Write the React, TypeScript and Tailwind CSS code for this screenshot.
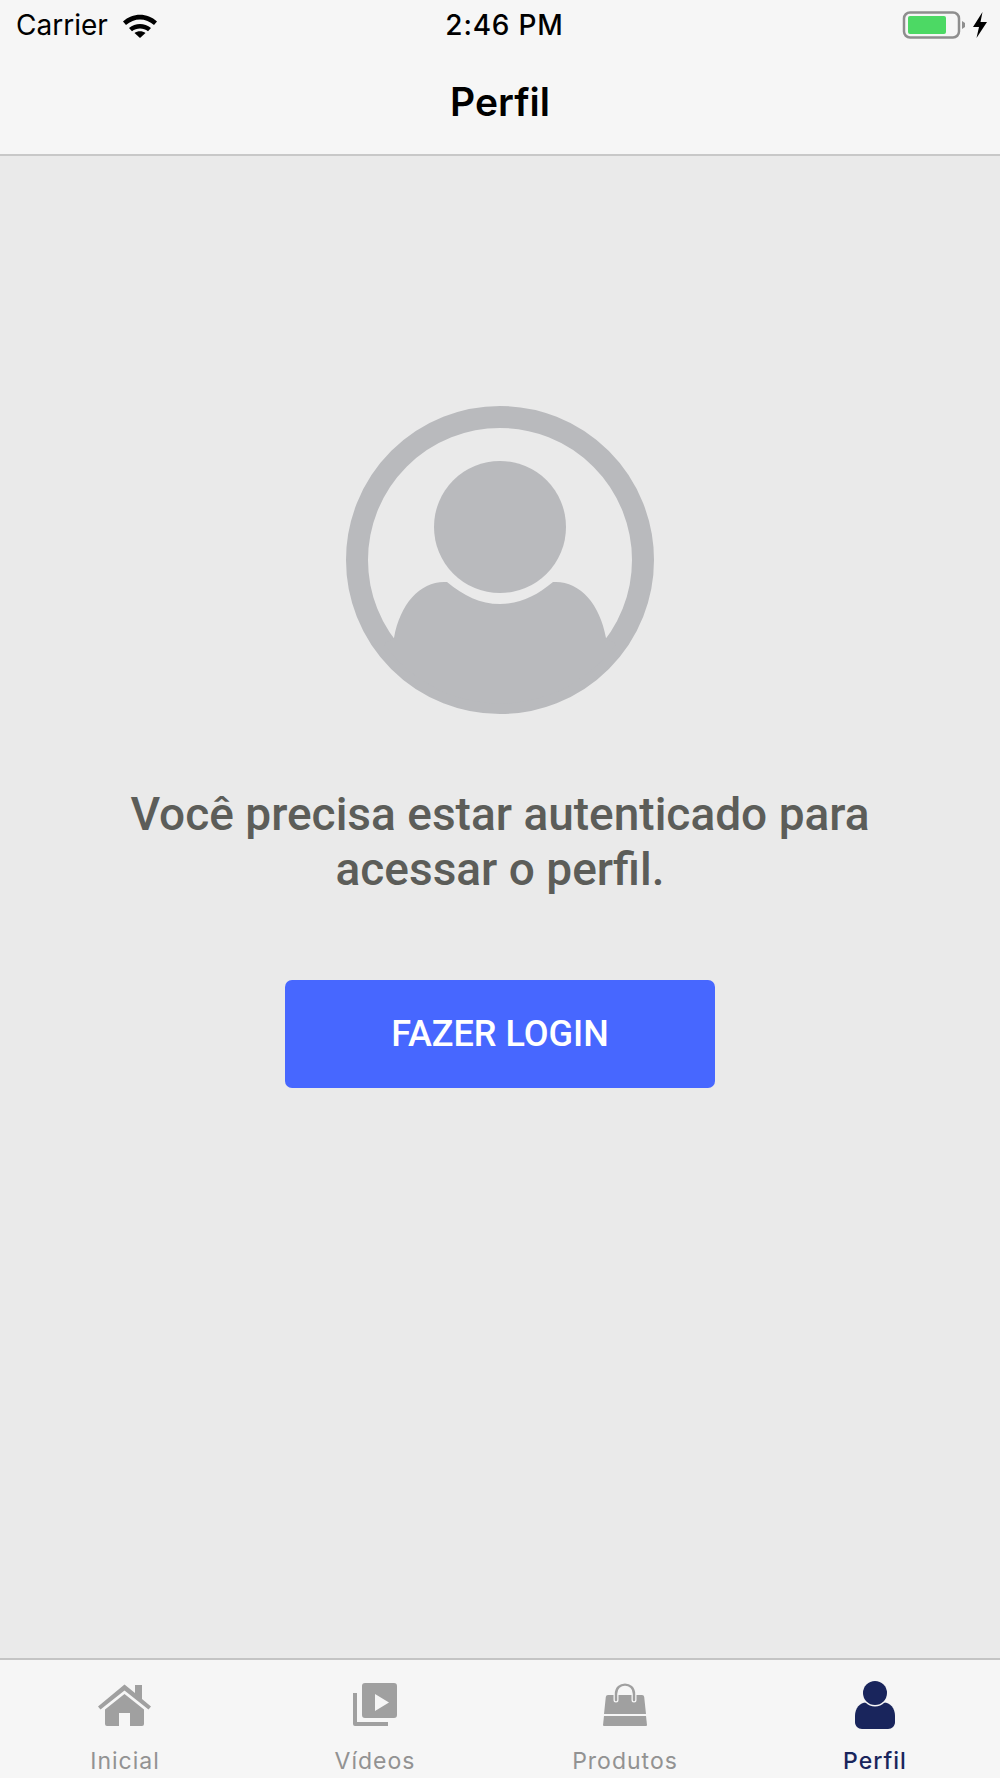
const tabs = [
  { name: "Inicial", icon: IconHome, active: false },
  { name: "Vídeos", icon: IconVideos, active: false },
  { name: "Produtos", icon: IconBag, active: false },
  { name: "Perfil", icon: IconPerson, active: true },
]

function IconWifi() {
  return (
    <svg width="36" height="26" viewBox="0 0 36 26" className="block">
      <path d="M1 9.5 C10.5 0.5 25.5 0.5 35 9.5 L32 13 C24 5.5 12 5.5 4 13 Z" fill="#000" />
      <path d="M7 16 C13.5 10.5 22.5 10.5 29 16 L26 19.3 C21.5 15.6 14.5 15.6 10 19.3 Z" fill="#000" />
      <path d="M12.5 21 C15.5 18.8 20.5 18.8 23.5 21 L18 26 Z" fill="#000" />
    </svg>
  )
}

function IconBattery() {
  return (
    <svg width="64" height="28" viewBox="0 0 64 28" className="block">
      <rect x="2" y="1.5" width="55" height="25" rx="6" fill="none" stroke="#8e8e8e" strokeWidth="2.5" />
      <rect x="6" y="5" width="38" height="18" rx="2" fill="#4cd964" />
      <path d="M60 10 L63 12 V16 L60 18 Z" fill="#8e8e8e" />
    </svg>
  )
}

function IconCharge() {
  return (
    <svg width="16" height="26" viewBox="0 0 16 26" className="block">
      <path d="M10.5 0 L1 15 H7 L4.5 26 L15 10 H8.5 Z" fill="#000" />
    </svg>
  )
}

function IconHome() {
  return (
    <svg width="54" height="44" viewBox="0 0 54 44" className="block">
      <path d="M26.5 0.5 L37 9 V1 H44 V15 L53 22.5 L50.5 25.5 L26.5 6.5 L2.5 25.5 L0 22.5 Z" fill="#a0a0a0" />
      <path d="M26.5 10 L46 25.5 V40 Q46 42 44 42 H32 V29 H21 V42 H9 Q7 42 7 40 V25.5 Z" fill="#a0a0a0" />
    </svg>
  )
}

function IconVideos() {
  return (
    <svg width="46" height="46" viewBox="0 0 46 46" className="block">
      <path d="M1 11 H5 V40 H36 V44 H3 Q1 44 1 42 Z" fill="#a0a0a0" />
      <path fillRule="evenodd" d="M13 1 H42 Q45 1 45 4 V33 Q45 36 42 36 H13 Q10 36 10 33 V4 Q10 1 13 1 Z M23 12 V29 L37 20.5 Z" fill="#a0a0a0" />
    </svg>
  )
}

function IconBag() {
  return (
    <svg width="46" height="46" viewBox="0 0 46 46" className="block">
      <path d="M6 13 H40 Q42 13 42.2 15 L44 32 H2 L3.8 15 Q4 13 6 13 Z" fill="#a0a0a0" />
      <path d="M2 34 H44 L45 43 Q45 44 44 44 H2 Q1 44 1 43 Z" fill="#a0a0a0" />
      <path d="M14 18 V12 C14 -0.5 32 -0.5 32 12 V18" fill="none" stroke="#f6f6f6" strokeWidth="5" strokeLinecap="round" />
      <path d="M14 18 V12 C14 -0.5 32 -0.5 32 12 V18" fill="none" stroke="#a0a0a0" strokeWidth="2.4" strokeLinecap="round" />
    </svg>
  )
}

function IconPerson() {
  return (
    <svg width="42" height="50" viewBox="0 0 42 50" className="mb-[-2px] block">
      <path d="M12 22.5 H30 C36 22.5 41 28 41 36 V42 C41 46 38 49 34 49 H8 C4 49 1 46 1 42 V36 C1 28 6 22.5 12 22.5 Z" fill="#19255c" />
      <circle cx="21" cy="13" r="13.5" fill="#f6f6f6" />
      <circle cx="21" cy="13" r="12" fill="#19255c" />
    </svg>
  )
}

function Avatar() {
  return (
    <svg width="308" height="308" viewBox="0 0 308 308" className="block">
      <circle cx="154" cy="154" r="143" fill="none" stroke="#b9babd" strokeWidth="22" />
      <circle cx="154" cy="121" r="66" fill="#b9babd" />
      <path
        d="M48 232 C54 198 74 176 98 176 H101 C118 190 134 198 154 198 C174 198 190 190 207 176 H210 C234 176 254 198 260 232 L270 238 A143 143 0 0 1 38 238 Z"
        fill="#b9babd"
      />
    </svg>
  )
}

export default function App() {
  return (
    <div className="flex h-[1778px] w-[1000px] flex-col overflow-hidden bg-[#eaeaea] font-['Inter',sans-serif]">
      <header className="h-[156px] shrink-0 border-b-2 border-[#c8c8c8] bg-[#f6f6f6]">
        <div className="relative flex h-[50px] items-center justify-between pl-[16px] pr-[12px]">
          <div className="flex items-center gap-[14px]">
            <span className="text-[28px] text-black">Carrier</span>
            <IconWifi />
          </div>
          <span className="absolute left-[9px] right-0 text-center text-[28px] font-medium tracking-[0.8px] text-black">2:46 PM</span>
          <div className="flex items-center gap-[6px]">
            <IconBattery />
            <IconCharge />
          </div>
        </div>
        <div className="mt-[28px] text-center text-[39px] font-semibold leading-[48px] text-black">Perfil</div>
      </header>

      <main className="flex flex-1 flex-col items-center pt-[250px]">
        <Avatar />
        <p className="mt-[73px] w-[800px] text-center font-['Roboto',sans-serif] text-[46px] font-medium leading-[55px] text-[#5c5d59]">
          Você precisa estar autenticado para acessar o perfil.
        </p>
        <button className="mt-[83px] h-[108px] w-[430px] rounded-[7px] bg-[#4767ff] font-['Roboto',sans-serif] text-[36px] font-medium text-white">
          FAZER LOGIN
        </button>
      </main>

      <nav className="grid h-[120px] shrink-0 grid-cols-4 border-t-2 border-[#c4c4c4] bg-[#f6f6f6]">
        {tabs.map((tab) => (
          <div key={tab.name} className="flex flex-col items-center">
            <div className="flex h-[68px] items-end">
              <tab.icon />
            </div>
            <span
              className={
                tab.active
                  ? "mt-[18px] text-[23px] font-medium leading-[30px] tracking-[1px] text-[#19255c]"
                  : "mt-[18px] text-[23px] leading-[30px] tracking-[1px] text-[#929292]"
              }
            >
              {tab.name}
            </span>
          </div>
        ))}
      </nav>
    </div>
  )
}
